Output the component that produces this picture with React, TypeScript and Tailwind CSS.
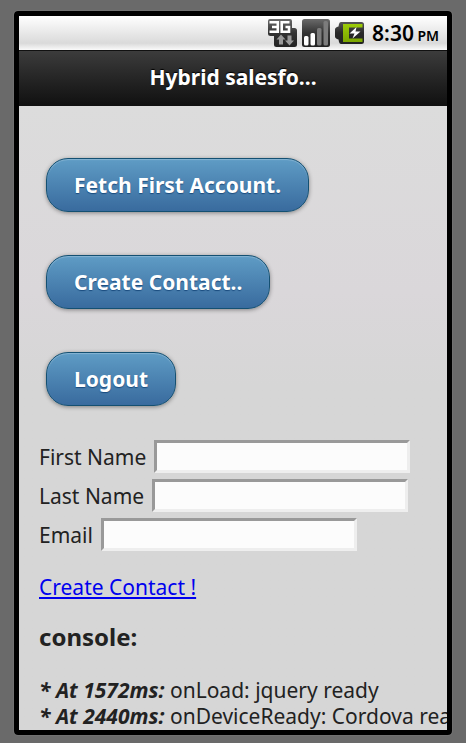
import React from "react";

function NetworkIcon() {
  return (
    <svg width="29" height="28" viewBox="0 0 29 28" aria-hidden="true">
      <defs>
        <linearGradient id="net" x1="0" y1="0" x2="0" y2="1">
          <stop offset="0" stopColor="#6a6a6a" />
          <stop offset="0.5" stopColor="#333" />
          <stop offset="1" stopColor="#222" />
        </linearGradient>
      </defs>
      <path d="M2 0h20q2 0 2 2v7h2.500q2.500 0 2.500 2.500v14q0 2.500-2.500 2.500h-18q-2.500 0-2.500-2.500v-8.500h-3.500q-2.500 0-2.500-2v-13q0-2 2-2z" fill="url(#net)" />
      <path d="M1.500 3.200h8.300v9.600h-8.300M4 8h5.500M21.500 3.200h-7.800v9.600h7.300v-4.800h-3.500" fill="none" stroke="#fff" strokeWidth="2.600" />
      <path d="M13 15.500l4.500 5h-2.500v5h-4v-5h-2.500z" fill="#999" />
      <path d="M21.500 26.500l-4.500-5h2.500v-5h4v5h2.500z" fill="#999" />
    </svg>
  );
}

function SignalIcon() {
  return (
    <svg width="28" height="28" viewBox="0 0 28 28" aria-hidden="true">
      <defs>
        <linearGradient id="sig" x1="0" y1="0" x2="0" y2="1">
          <stop offset="0" stopColor="#6a6a6a" />
          <stop offset="0.5" stopColor="#333" />
          <stop offset="1" stopColor="#222" />
        </linearGradient>
      </defs>
      <rect width="28" height="28" rx="2.500" fill="url(#sig)" />
      <rect x="2" y="17" width="4.500" height="9.500" rx="1.500" fill="#fff" />
      <rect x="8.500" y="14" width="4.500" height="12.500" rx="1.500" fill="#fff" />
      <rect x="15" y="9" width="4.500" height="17.500" rx="1.500" fill="#7c7c7c" />
      <rect x="21.500" y="2" width="4.500" height="24.500" rx="1.500" fill="#7c7c7c" />
    </svg>
  );
}

function BatteryIcon() {
  return (
    <svg width="29" height="22" viewBox="0 0 29 22" aria-hidden="true">
      <defs>
        <linearGradient id="bat" x1="0" y1="0" x2="0" y2="1">
          <stop offset="0" stopColor="#555" />
          <stop offset="0.5" stopColor="#282828" />
          <stop offset="1" stopColor="#222" />
        </linearGradient>
        <linearGradient id="charge" x1="0" y1="0" x2="0" y2="1">
          <stop offset="0" stopColor="#9ccc08" />
          <stop offset="1" stopColor="#7ba500" />
        </linearGradient>
      </defs>
      <path d="M6 0h20.500q2.500 0 2.500 2.500v17q0 2.500-2.500 2.500h-20.500q-1.500 0-2-2l-0.500-2.500q-3.500-1-3.500-3v-7q0-2 3.500-3l0.500-2.500q0.500-2 2-2z" fill="url(#bat)" />
      <path d="M8 2h19.500v3.500h-13.500v11h13.500v3.500h-19.500z" fill="url(#charge)" />
      <path d="M21.500 5l-7 6.500h5l-2 5 8-7h-5z" fill="#fff" />
    </svg>
  );
}

const actions = ["Fetch First Account.", "Create Contact..", "Logout"];

const fields = [
  { id: "first-name", label: "First Name" },
  { id: "last-name", label: "Last Name" },
  { id: "email", label: "Email" },
];

const logs = [
  { time: "1572", message: "onLoad: jquery ready" },
  { time: "2440", message: "onDeviceReady: Cordova ready" },
];

export default function App() {
  return (
    <div className="h-screen bg-[#6a6a6a] px-3.5 pt-[11px] pb-2 font-['Noto_Sans','Open_Sans',sans-serif] text-[21px] leading-7 text-[#222]">
      <div className="flex h-full flex-col overflow-hidden rounded-[4px] border-5 border-black bg-[#d8d8d8] shadow-[0_0_1px_#bbb]">
        <div className="flex h-[34px] shrink-0 items-center justify-end bg-linear-to-b from-white via-[#dadada] via-80% to-[#fafafa] pr-2 text-black">
          <div className="flex items-center gap-[5px]">
            <NetworkIcon />
            <SignalIcon />
            <BatteryIcon />
          </div>
          <span className="ml-2 font-semibold whitespace-nowrap">
            8:30 <span className="-ml-0.5 text-sm">PM</span>
          </span>
        </div>

        <header className="flex h-14 shrink-0 items-center justify-center border-y border-[#111] bg-linear-to-b from-[#3c3c3c] to-[#111] pb-0.5">
          <h1 className="font-bold text-white [text-shadow:0_-1px_1px_#000]">Hybrid salesfo...</h1>
        </header>

        <main className="min-h-0 flex-1 overflow-hidden bg-linear-to-b from-[#dcdcdc] via-[#dad7da] via-30% to-[#d6d6d6] to-45% pt-[52px] pl-5">
          <div className="flex flex-col items-start gap-[43px] pl-[7px]">
            {actions.map((label) => (
              <button
                key={label}
                type="button"
                className="h-[54px] rounded-[22px] border border-[#145072] bg-linear-to-b from-[#5f9cc5] to-[#396b9e] px-[27px] font-bold text-white shadow-[0_1px_4px_rgba(0,0,0,0.4),inset_0_1px_1px_rgba(255,255,255,0.25)] [text-shadow:0_1px_1px_#194b7e]"
              >
                {label}
              </button>
            ))}
          </div>

          <form className="mt-[34px] flex flex-col gap-1.5">
            {fields.map(({ id, label }) => (
              <div key={id} className="flex items-center gap-2">
                <label htmlFor={id}>{label}</label>
                <input
                  id={id}
                  type="text"
                  className="h-[33px] w-64 border-3 border-t-[#999] border-r-[#eee] border-b-[#eee] border-l-[#999] bg-[#fcfcfc] px-1 outline-none"
                />
              </div>
            ))}
          </form>

          <a href="#create" className="mt-[22px] block w-fit text-[#0000ee] underline">
            Create Contact !
          </a>

          <h2 className="mt-5 text-2xl font-bold">console:</h2>

          <div className="mt-6 leading-[26px] whitespace-nowrap">
            {logs.map(({ time, message }) => (
              <p key={time}>
                <b className="italic">* At {time}ms:</b> {message}
              </p>
            ))}
          </div>
        </main>
      </div>
    </div>
  );
}
